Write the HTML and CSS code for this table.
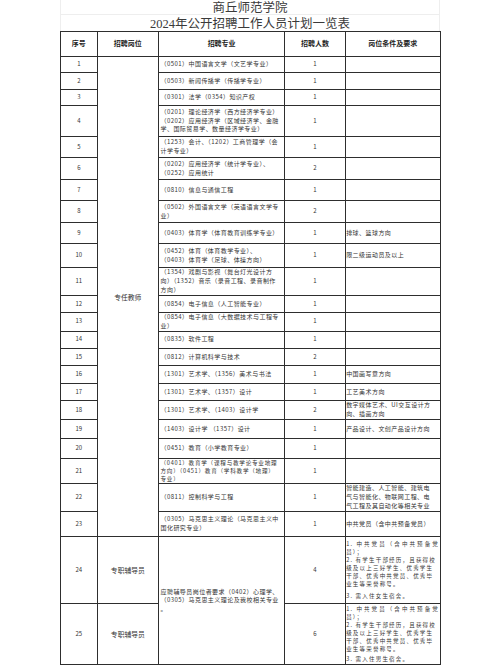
FILE: index.html
```html
<!DOCTYPE html>
<html lang="zh">
<head>
<meta charset="utf-8">
<title>商丘师范学院2024年公开招聘工作人员计划一览表</title>
<link rel="stylesheet" href="styles.css">
</head>
<body>
<div class="sheet">
  <div class="title">
    <div class="t1">商丘师范学院</div>
    <div class="t2">2024年公开招聘工作人员计划一览表</div>
  </div>
  <table>
    <colgroup>
      <col class="w-no"><col class="w-post"><col class="w-major"><col class="w-num"><col class="w-req">
    </colgroup>
    <thead>
      <tr class="rh"><th>序号</th><th>招聘岗位</th><th>招聘专业</th><th>招聘人数</th><th>岗位条件及要求</th></tr>
    </thead>
    <tbody>
      <tr class="r16"><td class="c">1</td><td class="c post" rowspan="23">专任教师</td><td>（0501）中国语言文学（文艺学专业）</td><td class="c">1</td><td></td></tr>
      <tr class="r16"><td class="c">2</td><td>（0503）新闻传播学（传播学专业）</td><td class="c">1</td><td></td></tr>
      <tr class="r16"><td class="c">3</td><td>（0301）法学（0354）知识产权</td><td class="c">1</td><td></td></tr>
      <tr class="r31"><td class="c">4</td><td>（0201）理论经济学（西方经济学专业）<br>（0202）应用经济学（区域经济学、金融<br>学、国际贸易学、数量经济学专业）</td><td class="c">1</td><td></td></tr>
      <tr class="r21"><td class="c">5</td><td>（1253）会计、（1202）工商管理学（会<br>计学专业）</td><td class="c">1</td><td></td></tr>
      <tr class="r21"><td class="c">6</td><td>（0202）应用经济学（统计学专业）、<br>（0252）应用统计</td><td class="c">2</td><td></td></tr>
      <tr class="r21"><td class="c">7</td><td>（0810）信息与通信工程</td><td class="c">1</td><td></td></tr>
      <tr class="r21"><td class="c">8</td><td>（0502）外国语言文学（英语语言文学专<br>业）</td><td class="c">2</td><td></td></tr>
      <tr class="r21"><td class="c">9</td><td>（0403）体育学（体育教育训练学专业）</td><td class="c">1</td><td class="req">排球、篮球方向</td></tr>
      <tr class="r24"><td class="c">10</td><td>（0452）体育（体育教学专业）、<br>（0403）体育学（足球、体操方向）</td><td class="c">1</td><td class="req">限二级运动员及以上</td></tr>
      <tr class="r28"><td class="c">11</td><td>（1354）戏剧与影视（舞台灯光设计方<br>向）（1352）音乐（录音工程、录音制作<br>方向）</td><td class="c">1</td><td></td></tr>
      <tr class="r17"><td class="c">12</td><td>（0854）电子信息（人工智能专业）</td><td class="c">1</td><td></td></tr>
      <tr class="r18"><td class="c">13</td><td>（0854）电子信息（大数据技术与工程专<br>业）</td><td class="c">1</td><td></td></tr>
      <tr class="r17"><td class="c">14</td><td>（0835）软件工程</td><td class="c">1</td><td></td></tr>
      <tr class="r17"><td class="c">15</td><td>（0812）计算机科学与技术</td><td class="c">2</td><td></td></tr>
      <tr class="r17"><td class="c">16</td><td>（1301）艺术学、（1356）美术与书法</td><td class="c">1</td><td class="req">中国画写意方向</td></tr>
      <tr class="r17"><td class="c">17</td><td>（1301）艺术学、（1357）设计</td><td class="c">1</td><td class="req">工艺美术方向</td></tr>
      <tr class="r19"><td class="c">18</td><td>（1301）艺术学、（1403）设计学</td><td class="c">2</td><td class="req">数字媒体艺术、UI交互设计方<br>向、插画方向</td></tr>
      <tr class="r19"><td class="c">19</td><td>（1403）设计学 （1357）设计</td><td class="c">1</td><td class="req">产品设计、文创产品设计方向</td></tr>
      <tr class="r19"><td class="c">20</td><td>（0451）教育（小学教育专业）</td><td class="c">1</td><td></td></tr>
      <tr class="r25"><td class="c">21</td><td class="tight">（0401）教育学（课程与教学论专业地理<br>方向）（0451）教育（学科教学（地理）<br>专业）</td><td class="c">1</td><td></td></tr>
      <tr class="r28"><td class="c">22</td><td>（0811）控制科学与工程</td><td class="c">1</td><td class="req">智能建造、人工智能、建筑电<br>气与智能化、物联网工程、电<br>气工程及其自动化等相关专业</td></tr>
      <tr class="r25"><td class="c">23</td><td>（0305）马克思主义理论（马克思主义中<br>国化研究专业）</td><td class="c">1</td><td class="req">中共党员（含中共预备党员）</td></tr>
      <tr class="r67">
        <td class="c">24</td><td class="c post">专职辅导员</td>
        <td rowspan="2">应聘辅导员岗位者要求（0402）心理学、<br>（0305）马克思主义理论及我校相关专业<br>。</td>
        <td class="c">4</td>
        <td class="req list">
          <span class="ln just">1. 中共党员（含中共预备党</span>
          <span class="ln">员）；</span>
          <span class="ln">2. 有学生干部经历，且获得校</span>
          <span class="ln">级及以上三好学生、优秀学生</span>
          <span class="ln">干部、优秀中共党员、优秀毕</span>
          <span class="ln">业生等荣誉称号。</span>
          <span class="ln gap">3. 需入住女生宿舍。</span>
        </td>
      </tr>
      <tr class="r61">
        <td class="c">25</td><td class="c post">专职辅导员</td>
        <td class="c">6</td>
        <td class="req list">
          <span class="ln just">1. 中共党员（含中共预备党</span>
          <span class="ln">员）；</span>
          <span class="ln">2. 有学生干部经历，且获得校</span>
          <span class="ln">级及以上三好学生、优秀学生</span>
          <span class="ln">干部、优秀中共党员、优秀毕</span>
          <span class="ln">业生等荣誉称号。</span>
          <span class="ln gap2">3. 需入住男生宿舍。</span>
        </td>
      </tr>
    </tbody>
  </table>
</div>
</body>
</html>
```

FILE: styles.css
```css
html, body {
  margin: 0;
  padding: 0;
  background: #ffffff;
}

.sheet {
  width: 380px;
  margin-left: 60px;
  font-family: "Noto Sans CJK SC", sans-serif;
}

.title {
  height: 30.7px;
  box-sizing: border-box;
  border-left: 1px solid #eeeeee;
  border-right: 1px solid #eeeeee;
  font-family: "Liberation Serif", "Noto Sans CJK SC", serif;
  font-size: 12.5px;
  color: #3a3a3a;
  text-align: center;
}

.t1 {
  height: 15px;
  box-sizing: border-box;
  padding-top: 2px;
  line-height: 13px;
  border-bottom: 1px solid #eeeeee;
}

.t2 {
  height: 15.7px;
  box-sizing: border-box;
  padding-top: 2.5px;
  line-height: 13px;
}

table {
  width: 380px;
  border-collapse: collapse;
  table-layout: fixed;
  border: 1.5px solid #222222;
}

.w-no { width: 36.7px; }
.w-post { width: 61.3px; }
.w-major { width: 126.3px; }
.w-num { width: 60.4px; }
.w-req { width: 95.3px; }

th, td {
  border: 1px solid #2e2e2e;
  padding: 0 1.5px;
  font-size: 6px;
  line-height: 8.7px;
  letter-spacing: 0.45px;
  color: #333333;
  vertical-align: middle;
  text-align: left;
  white-space: nowrap;
  overflow: hidden;
}

th {
  font-weight: 700;
  font-size: 7px;
  line-height: 10.2px;
  letter-spacing: 0;
  color: #222222;
  text-align: center;
  font-family: "Liberation Serif", "Noto Sans CJK SC", serif;
}

td.c {
  text-align: center;
  letter-spacing: 0;
}

td.post {
  font-size: 6.8px;
  line-height: 10px;
}

td.req {
  padding: 0 1px 0 0.5px;
}

td.tight {
  font-size: 5.6px;
  line-height: 8.15px;
  letter-spacing: 0.75px;
}

.rh { height: 25.3px; }
.r16 { height: 16.4px; }
.r17 { height: 17.4px; }
.r18 { height: 18.4px; }
.r19 { height: 19.2px; }
.r21 { height: 21.5px; }
.r24 { height: 23.6px; }
.r25 { height: 25.2px; }
.r28 { height: 27.8px; }
.r31 { height: 30.7px; }
.r67 { height: 67.3px; }
.r61 { height: 61px; }

.list {
  font-size: 5.5px;
  line-height: 8px;
  letter-spacing: 1.2px;
}

.ln {
  display: block;
}

.just {
  text-align: justify;
  text-align-last: justify;
}

.gap {
  margin-top: 4px;
}

.gap2 {
  margin-top: 2px;
}
```
